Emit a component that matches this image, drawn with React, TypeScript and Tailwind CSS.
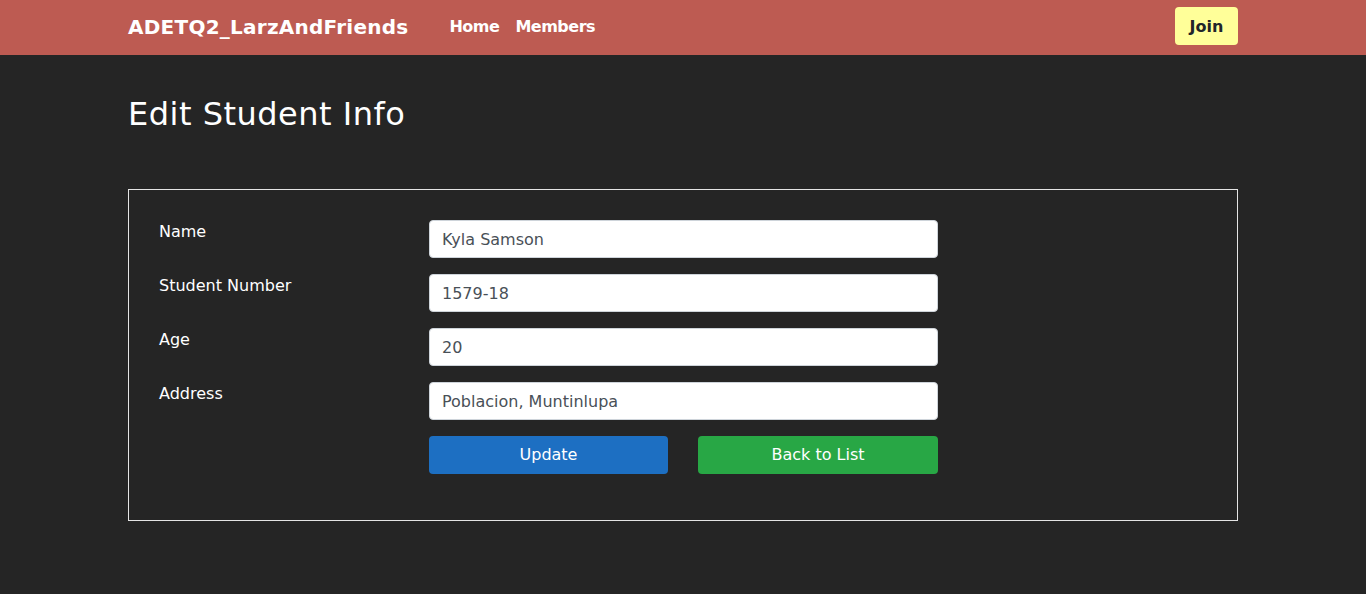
import React from "react";

const font = { fontFamily: "'DejaVu Sans', sans-serif" };

function Field({ label, value }: { label: string; value: string }) {
  return (
    <div className="flex items-start">
      <label className="w-[270px] text-[16px] leading-6 text-white">{label}</label>
      <input
        readOnly
        value={value}
        className="w-[509px] h-[38px] rounded-[4px] border border-[#ced4da] bg-white px-3 text-[16px] text-[#495057] outline-none"
      />
    </div>
  );
}

export default function App() {
  return (
    <div className="min-h-[594px] bg-[#252525]" style={font}>
      <nav className="h-[55px] bg-[#bd5b52] pt-[7px]">
        <div className="mx-auto flex h-[38px] w-[1110px] items-center">
          <span className="pt-[2px] text-[20px] font-bold tracking-[0.25px] text-white">ADETQ2_LarzAndFriends</span>
          <div className="ml-[41px] flex gap-[16px] pt-[2px] text-[16px] font-bold tracking-[-0.5px] text-white">
            <span>Home</span>
            <span>Members</span>
          </div>
          <button className="ml-auto h-[38px] w-[63px] rounded-[4px] bg-[#ffff99] pt-[1px] text-[16px] font-bold text-[#212529]">
            Join
          </button>
        </div>
      </nav>
      <main className="mx-auto w-[1110px]">
        <h2 className="pt-[40px] text-[32px] font-normal leading-[1.2] tracking-[0.5px] text-white">Edit Student Info</h2>
        <div className="mt-[56px] border border-[#e5e5e5] px-[30px] pt-[30px] pb-[46px]">
          <div className="flex flex-col gap-4">
            <Field label="Name" value="Kyla Samson" />
            <Field label="Student Number" value="1579-18" />
            <Field label="Age" value="20" />
            <Field label="Address" value="Poblacion, Muntinlupa" />
            <div className="flex">
              <div className="w-[270px]" />
              <div className="flex w-[509px] gap-[30px]">
                <button className="h-[38px] w-[239px] rounded-[4px] bg-[#1d6fc2] text-[16px] text-white">Update</button>
                <button className="h-[38px] w-[240px] rounded-[4px] bg-[#28a745] text-[16px] text-white">Back to List</button>
              </div>
            </div>
          </div>
        </div>
      </main>
    </div>
  );
}
